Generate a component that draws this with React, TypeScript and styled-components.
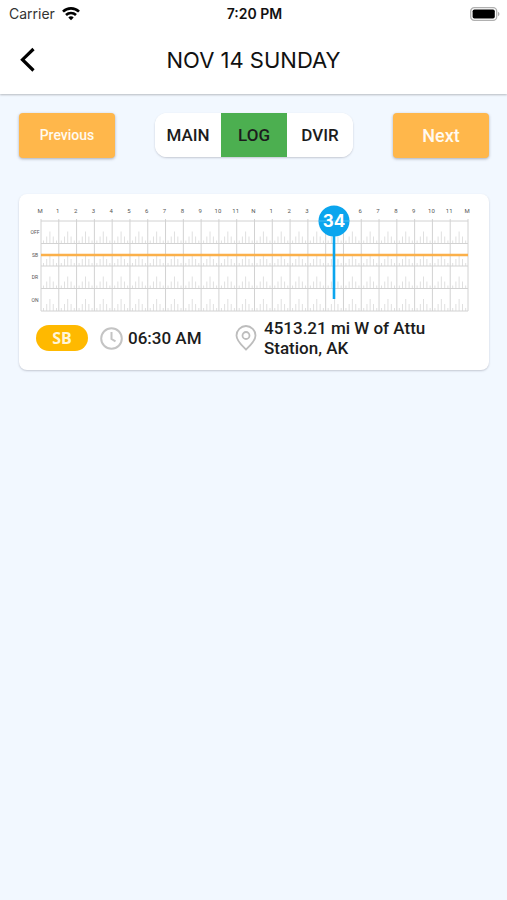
import React from "react";
import styled, { createGlobalStyle } from "styled-components";

const GlobalStyle = createGlobalStyle`
  * { box-sizing: border-box; }
  body { margin: 0; background: #f2f8ff; font-family: Roboto, "Liberation Sans", sans-serif; color: #1c1c1c; }
  button { font: inherit; color: inherit; border: 0; margin: 0; padding: 0; cursor: pointer; }
  svg { flex-shrink: 0; }
`;

const Screen = styled.main`
  min-height: 100vh;
  background: #f2f8ff;
`;

const TopArea = styled.header`
  background: #fff;
  padding-bottom: 1px;
  box-shadow: 0 1px 2px rgba(0, 0, 0, 0.25);
`;

const StatusBar = styled.div`
  display: grid;
  grid-template-columns: 1fr auto 1fr;
  align-items: center;
  height: 27px;
  padding: 0 7px 0 9px;
  font-family: Inter, "Liberation Sans", sans-serif;
  font-size: 14px;
  color: #111;
`;

const Carrier = styled.div`
  display: flex;
  align-items: center;
  gap: 7px;
  color: #333;
`;

const Clock = styled.time`
  font-weight: 600;
`;

const Battery = styled.div`
  display: flex;
  justify-content: flex-end;
`;

const TitleBar = styled.div`
  display: grid;
  grid-template-columns: 56px 1fr 56px;
  align-items: center;
  height: 66px;
`;

const BackButton = styled.button`
  display: flex;
  align-items: center;
  height: 48px;
  padding-left: 19px;
  background: none;
`;

const Title = styled.h1`
  margin: 0;
  text-align: center;
  font-family: Inter, "Liberation Sans", sans-serif;
  font-size: 22px;
  font-weight: 400;
  line-height: 28px;
  color: #111;
`;

const Content = styled.div`
  padding: 19px 18px 24px 19px;
`;

const Toolbar = styled.nav`
  display: flex;
  justify-content: space-between;
  margin-bottom: 36px;
`;

const NavButton = styled.button<{ $small?: boolean }>`
  && {
    width: 96px;
    height: 45px;
    padding-bottom: 1px;
    border-radius: 4px;
    background: #ffb74b;
    color: #fffaf0;
    font-weight: 500;
    font-size: ${(p) => (p.$small ? 14 : 18)}px;
    box-shadow: 0 1px 3px rgba(60, 60, 80, 0.4);
  }
`;

const Segments = styled.div`
  display: flex;
  height: 44px;
  border-radius: 12px;
  overflow: hidden;
  background: #fff;
  box-shadow: 0 1px 2px rgba(60, 60, 80, 0.25);
`;

const Segment = styled.button<{ $active?: boolean }>`
  && {
    width: 66px;
    background: ${(p) => (p.$active ? "#4caf50" : "#fff")};
    font-size: 17px;
    font-weight: 500;
  }
`;

const Card = styled.section`
  background: #fff;
  border-radius: 8px;
  padding-bottom: 12px;
  box-shadow: 0 1px 2px rgba(60, 60, 80, 0.25);
`;

const Chart = styled.svg`
  display: block;
  width: 100%;
  height: auto;
  font-family: Roboto, "Liberation Sans", sans-serif;
`;

const Details = styled.div`
  display: flex;
  align-items: center;
  padding: 4px 17px 0;
  font-size: 17px;
  font-weight: 500;
  line-height: 20px;
`;

const StatusBadge = styled.span`
  width: 52px;
  height: 26px;
  margin-right: 12px;
  border-radius: 13px;
  background: #ffb900;
  color: #fff5d8;
  font-family: "Open Sans", "Liberation Sans", sans-serif;
  font-size: 16px;
  font-weight: 700;
  line-height: 26px;
  text-align: center;
`;

const EventTime = styled.div`
  display: flex;
  align-items: center;
  gap: 5px;
  width: 135px;
  white-space: nowrap;
`;

const Place = styled.address`
  display: flex;
  align-items: center;
  gap: 7px;
  flex: 1;
  max-width: 220px;
  font-style: normal;
`;

const HOURS = ["M", "1", "2", "3", "4", "5", "6", "7", "8", "9", "10", "11", "N", "1", "2", "3", "4", "5", "6", "7", "8", "9", "10", "11", "M"];
const ROWS = ["OFF", "SB", "DR", "ON"];
const LEFT = 22;
const TOP = 27;
const HOUR_WIDTH = 427 / 24;
const ROW_HEIGHT = 22.5;
const TICKS = [
  { at: 0.14, len: 3 },
  { at: 0.32, len: 7 },
  { at: 0.5, len: 12 },
  { at: 0.69, len: 7 },
  { at: 0.87, len: 3 },
];
const MARKER_X = 315;
const MARKER_RADIUS = 15.5;

function LogChart() {
  const right = LEFT + HOUR_WIDTH * 24;
  const bottom = TOP + ROW_HEIGHT * 4;
  return (
    <Chart viewBox="0 0 470 120" role="img" aria-label="Duty status over 24 hours">
      <g fontSize="6" fill="#555" textAnchor="middle">
        {HOURS.map((h, i) => {
          const x = LEFT + i * HOUR_WIDTH;
          const covered = Math.abs(x - MARKER_X) < MARKER_RADIUS;
          return covered ? null : <text key={i} x={x - 1} y="19">{h}</text>;
        })}
        {ROWS.map((r, i) => (
          <text key={r} x="16" y={TOP + i * ROW_HEIGHT + 13} fontSize="5">{r}</text>
        ))}
      </g>
      <g stroke="#e0e0e0" strokeWidth="1">
        {ROWS.map((r, row) =>
          HOURS.slice(1).map((_, h) =>
            TICKS.map(({ at, len }) => {
              const x = LEFT + (h + at) * HOUR_WIDTH;
              const y = TOP + (row + 1) * ROW_HEIGHT;
              return <line key={`${r}${h}${at}`} x1={x} x2={x} y1={y - len} y2={y} />;
            })
          )
        )}
      </g>
      <g stroke="#d2d2d2" strokeWidth="1">
        {HOURS.map((_, i) => (
          <line key={i} x1={LEFT + i * HOUR_WIDTH} x2={LEFT + i * HOUR_WIDTH} y1={TOP - 2} y2={bottom} />
        ))}
        {[0, 1, 2, 3, 4].map((i) => (
          <line key={i} x1={LEFT} x2={right} y1={TOP + i * ROW_HEIGHT} y2={TOP + i * ROW_HEIGHT} />
        ))}
      </g>
      <line x1={LEFT} x2={right} y1="61" y2="61" stroke="#fbb04a" strokeWidth="2.4" />
      <line x1={MARKER_X} x2={MARKER_X} y1={TOP} y2="105" stroke="#0ba5ee" strokeWidth="2.6" />
      <circle cx={MARKER_X} cy={TOP} r={MARKER_RADIUS} fill="#0ba5ee" />
      <line x1={MARKER_X - 15} x2={MARKER_X + 15} y1={TOP} y2={TOP} stroke="#fff" strokeOpacity="0.25" />
      <text x={MARKER_X} y="33" textAnchor="middle" fontFamily="Inter, sans-serif" fontSize="17" fontWeight="700" fill="#fff">34</text>
    </Chart>
  );
}

export default function App() {
  return (
    <Screen>
      <GlobalStyle />
      <TopArea>
        <StatusBar>
          <Carrier>
            Carrier
            <svg width="18" height="14" viewBox="0 0 18 14" fill="none" stroke="#000" strokeWidth="2.6" aria-hidden="true">
              <path d="M1 4.700C5.400 .3 12.600 .3 17 4.700" />
              <path d="M4 8C6.800 5.300 11.200 5.300 14 8" />
              <path d="M6.300 10.400C7.800 9 10.200 9 11.700 10.400L9 13.200Z" fill="#000" stroke="none" />
            </svg>
          </Carrier>
          <Clock>7:20 PM</Clock>
          <Battery>
            <svg width="30" height="14" viewBox="0 0 30 14" aria-label="Battery full" role="img">
              <rect x=".7" y=".7" width="26" height="12.6" rx="3.6" fill="#fff" stroke="#b0b0b0" strokeWidth="1.3" />
              <rect x="2.6" y="2.5" width="22.2" height="9" rx="1.8" fill="#000" />
              <path d="M28 4.8c2 .8 2 3.6 0 4.4z" fill="#aaa" />
            </svg>
          </Battery>
        </StatusBar>
        <TitleBar>
          <BackButton aria-label="Back">
            <svg width="18" height="26" viewBox="0 0 18 26" fill="none" stroke="#000" strokeWidth="3.2" aria-hidden="true">
              <path d="M14.500 2L3.500 12.700L14.500 23.500" />
            </svg>
          </BackButton>
          <Title>NOV 14 SUNDAY</Title>
        </TitleBar>
      </TopArea>
      <Content>
        <Toolbar>
          <NavButton $small>Previous</NavButton>
          <Segments>
            <Segment>MAIN</Segment>
            <Segment $active aria-pressed="true">LOG</Segment>
            <Segment>DVIR</Segment>
          </Segments>
          <NavButton>Next</NavButton>
        </Toolbar>
        <Card>
          <LogChart />
          <Details>
            <StatusBadge>SB</StatusBadge>
            <EventTime>
              <svg width="23" height="23" viewBox="0 0 23 23" fill="none" stroke="#c4c4c4" strokeWidth="2" aria-hidden="true">
                <circle cx="11.5" cy="11.5" r="10.3" />
                <path d="M11.5 5v7l4 2.4" />
              </svg>
              06:30 AM
            </EventTime>
            <Place>
              <svg width="22" height="26" viewBox="0 0 22 26" fill="none" stroke="#bdbdbd" strokeWidth="1.8" aria-hidden="true">
                <path d="M11 24.500C7 20.500 1.500 16 1.500 10.500a9.500 9.500 0 0 1 19 0C20.500 16 15 20.500 11 24.500Z" />
                <circle cx="11" cy="10.500" r="3.500" />
              </svg>
              <span>4513.21 mi W of Attu Station, AK</span>
            </Place>
          </Details>
        </Card>
      </Content>
    </Screen>
  );
}
